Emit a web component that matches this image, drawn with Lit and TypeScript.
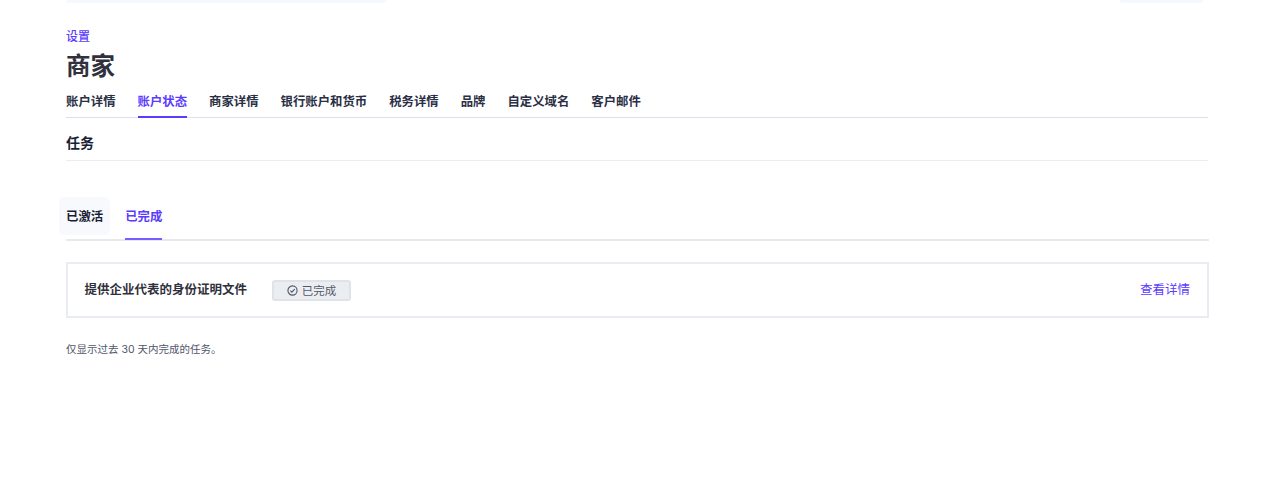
import { LitElement, html, css } from "lit";
import { customElement } from "lit/decorators.js";

const NAV = ["账户详情", "账户状态", "商家详情", "银行账户和货币", "税务详情", "品牌", "自定义域名", "客户邮件"];

@customElement("app-root")
export class AppRoot extends LitElement {
  static styles = css`
    :host {
      display: block;
      height: 484px;
      overflow: hidden;
      background: #fff;
      font-family: Inter, "Noto Sans CJK SC", "Liberation Sans", sans-serif;
      color: #1a1f36;
    }
    .top {
      display: flex;
      justify-content: space-between;
      height: 3px;
      overflow: hidden;
      width: 1280px;
      box-sizing: border-box;
      padding: 0 77px 0 66px;
    }
    .pill {
      height: 3px;
      background: #f5f8fc;
      border-radius: 0 0 10px 10px;
    }
    .pill.a { width: 320px; }
    .pill.b { width: 83px; }
    .page {
      padding: 0 71px 0 66px;
    }
    .crumb {
      margin-top: 25px;
      height: 17px;
      line-height: 17px;
      font-size: 12px;
      font-weight: 500;
      color: #5b3cff;
    }
    h1 {
      margin: 3px 0 0;
      height: 36px;
      line-height: 36px;
      font-size: 24.5px;
      font-weight: 600;
      color: #30313d;
    }
    .nav {
      display: flex;
      gap: 22px;
      margin-top: 4px;
      height: 29px;
      margin-right: 1px;
      border-bottom: 1px solid #d8e0ec;
    }
    .nav a {
      font-size: 12.38px;
      font-weight: 600;
      line-height: 28px;
      height: 30px;
      box-sizing: border-box;
      color: #2a2f45;
    }
    .nav a.on {
      color: #5b3cff;
      border-bottom: 2px solid #5b3cff;
    }
    .section {
      height: 42px;
      line-height: 50px;
      font-size: 14px;
      font-weight: 600;
      color: #1a1f36;
      margin-right: 1px;
      border-bottom: 1px solid #ebeef1;
    }
    .tabs {
      display: flex;
      align-items: flex-start;
      margin-top: 36px;
      height: 42px;
      border-bottom: 2px solid #e6eaf0;
      gap: 15px;
    }
    .tab {
      font-size: 12.38px;
      font-weight: 600;
      line-height: 40px;
      box-sizing: border-box;
    }
    .tab.idle {
      height: 38px;
      margin-left: -7px;
      padding: 0 7px;
      background: #f7f9fc;
      border-radius: 6px;
      color: #1a1f36;
    }
    .tab.on {
      height: 43px;
      color: #5b3cff;
      border-bottom: 2px solid #7a5cff;
    }
    .card {
      display: flex;
      align-items: center;
      margin-top: 21px;
      height: 56px;
      box-sizing: border-box;
      padding: 0 17px 0 16.5px;
      border: 2px solid #e9ecf1;
    }
    .name {
      font-size: 12.5px;
      line-height: 16px;
      font-weight: 600;
      color: #30313d;
    }
    .badge {
      display: flex;
      align-items: center;
      justify-content: center;
      gap: 4px;
      width: 79px;
      height: 21px;
      margin-left: 25px;
      box-sizing: border-box;
      background: #ebeef1;
      border: 2px solid #dfe3e9;
      border-radius: 3px;
      font-size: 11.5px;
      color: #545969;
    }
    .badge svg { display: block; }
    .more {
      margin-left: auto;
      font-size: 12.5px;
      line-height: 16px;
      color: #5b3cff;
    }
    .note {
      margin-top: 24px;
      height: 16px;
      line-height: 16px;
      font-size: 10.5px;
      color: #4f566b;
    }
  `;

  render() {
    return html`
      <div class="top"><div class="pill a"></div><div class="pill b"></div></div>
      <div class="page">
        <div class="crumb">设置</div>
        <h1>商家</h1>
        <div class="nav">
          ${NAV.map((n, i) => html`<a class=${i === 1 ? "on" : ""}>${n}</a>`)}
        </div>
        <div class="section">任务</div>
        <div class="tabs">
          <div class="tab idle">已激活</div>
          <div class="tab on">已完成</div>
        </div>
        <div class="card">
          <div class="name">提供企业代表的身份证明文件</div>
          <div class="badge">
            <svg width="11" height="11" viewBox="0 0 12 12" fill="none" stroke="#4f5566" stroke-width="1.2">
              <circle cx="6" cy="6" r="5"></circle>
              <path d="M3.7 6.2 5.3 7.8 8.4 4.6"></path>
            </svg>
            已完成
          </div>
          <a class="more">查看详情</a>
        </div>
        <div class="note">仅显示过去 30 天内完成的任务。</div>
      </div>
    `;
  }
}
